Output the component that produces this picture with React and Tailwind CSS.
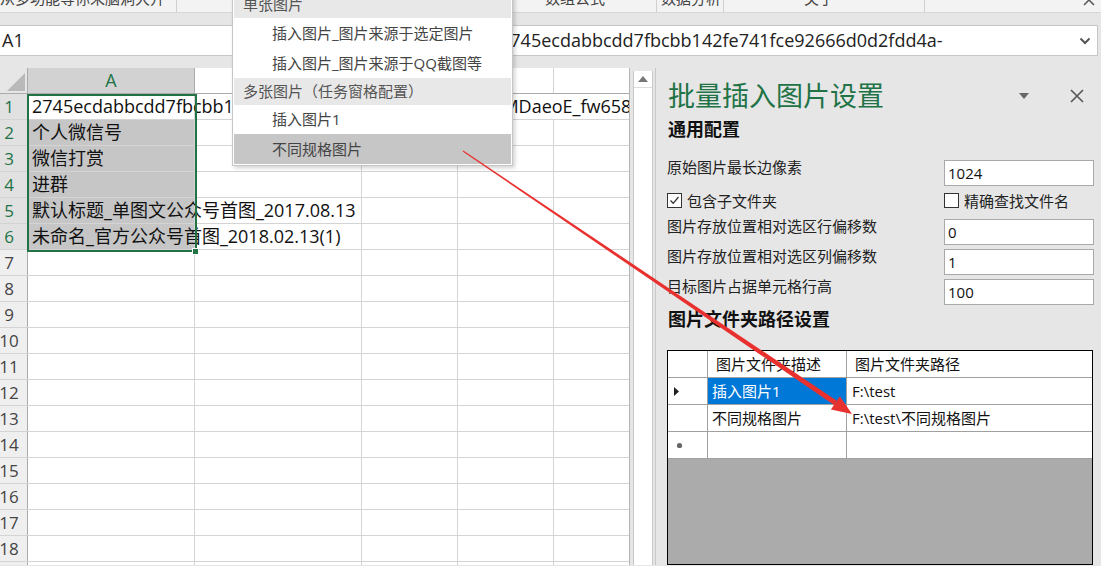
import React from "react";

const F = "font-['Open_Sans','Noto_Sans_CJK_SC',sans-serif]";

const rowsData = [
  { n: 1, a: "2745ecdabbcdd7fbcbb142fe741fce92666d0d2fdd4a-wwMDaeoE_fw658.jpg", merge: true, active: true },
  { n: 2, a: "个人微信号" },
  { n: 3, a: "微信打赏" },
  { n: 4, a: "进群" },
  { n: 5, a: "默认标题_单图文公众号首图_2017.08.13" },
  { n: 6, a: "未命名_官方公众号首图_2018.02.13(1)" },
  { n: 7 }, { n: 8 }, { n: 9 }, { n: 10 }, { n: 11 }, { n: 12 }, { n: 13 },
  { n: 14 }, { n: 15 }, { n: 16 }, { n: 17 }, { n: 18 }, { n: 19 },
];

function GridRow({ r }) {
  const sel = r.n <= 6;
  return (
    <div className="flex h-[26px] shrink-0 border-b border-[#d4d4d4]">
      <div
        className={
          sel
            ? "w-[28px] shrink-0 border-r border-[#ababab] bg-[#e1e1e1] text-[#217346] flex items-center justify-center pr-[9px] text-[17px] leading-[25px]"
            : "w-[28px] shrink-0 border-r border-[#ababab] bg-[#efefef] text-[#444444] flex items-center justify-center pr-[9px] text-[17px] leading-[25px]"
        }
      >
        {r.n}
      </div>
      <div
        className={
          sel && !r.active
            ? "relative z-10 w-[167px] shrink-0 border-r border-[#d4d4d4] bg-[#c6c6c6] pl-[4px] whitespace-nowrap text-[18px] leading-[25px] text-[#111]"
            : "relative z-10 w-[167px] shrink-0 border-r border-[#d4d4d4] bg-white pl-[4px] whitespace-nowrap text-[18px] leading-[25px] text-[#111]"
        }
      >
        {r.a || ""}
      </div>
      {r.merge ? (
        <div className="flex-1 bg-white" />
      ) : (
        <>
          <div className="w-[167px] shrink-0 border-r border-[#d4d4d4] bg-white" />
          <div className="w-[96px] shrink-0 border-r border-[#d4d4d4] bg-white" />
          <div className="w-[96px] shrink-0 border-r border-[#d4d4d4] bg-white" />
          <div className="flex-1 bg-white" />
        </>
      )}
    </div>
  );
}

function Sheet() {
  return (
    <div className="w-[630px] shrink-0 flex flex-col overflow-hidden border-r border-[#b4b4b4] bg-white">
      <div className="flex h-[26px] shrink-0 border-b border-[#ababab] bg-white">
        <div className="w-[28px] shrink-0 border-r border-[#ababab] bg-[#e6e6e6] relative">
          <svg className="absolute left-[6px] top-[4px]" width="20" height="20" viewBox="0 0 20 20">
            <polygon points="1,19 19,1 19,19" fill="#b9b9b9" />
          </svg>
        </div>
        <div className="w-[167px] shrink-0 border-r border-[#ababab] bg-[#d2d2d2] text-[#217346] text-[18px] leading-[25px] flex items-center justify-center">
          A
        </div>
        <div className="w-[167px] shrink-0 border-r border-[#d4d4d4] text-[#444] text-[18px] leading-[25px] flex items-center justify-center">
          B
        </div>
        <div className="w-[96px] shrink-0 border-r border-[#d4d4d4] text-[#444] text-[18px] leading-[25px] flex items-center justify-center">
          C
        </div>
        <div className="w-[96px] shrink-0 border-r border-[#d4d4d4]" />
        <div className="flex-1" />
      </div>
      {rowsData.map((r) => (
        <GridRow key={r.n} r={r} />
      ))}
    </div>
  );
}

function Field({ label, value }) {
  return (
    <div className="flex justify-between items-start">
      <div className="-mt-[3px] text-[15px] leading-[20px] text-[#222]">{label}</div>
      <div className="w-[150px] h-[26px] bg-white border border-[#a9a9a9] pl-[3px] text-[15px] leading-[24px] text-[#111]">
        {value}
      </div>
    </div>
  );
}

function Panel() {
  return (
    <div className="flex-1 flex flex-col pl-[11px] pr-[7px] bg-[#e6e6e6] min-w-0">
      <div className="flex items-center mt-[11px] h-[34px]">
        <div className="text-[27px] leading-[34px] text-[#217346] pl-[1px]">批量插入图片设置</div>
        <div className="flex-1" />
        <svg width="12" height="8" viewBox="0 0 12 8" className="mr-[40px]">
          <polygon points="1,1 11,1 6,7" fill="#666" />
        </svg>
        <svg width="14" height="14" viewBox="0 0 14 14" className="mr-[10px]">
          <path d="M1 1 L13 13 M13 1 L1 13" stroke="#555" strokeWidth="1.6" />
        </svg>
      </div>
      <div className="mt-[4px] text-[18px] leading-[24px] font-bold text-[#111] pl-[1px]">通用配置</div>
      <div className="mt-[19px]">
        <Field label="原始图片最长边像素" value="1024" />
      </div>
      <div className="mt-[7px] flex justify-between items-center h-[15px]">
        <div className="flex items-center gap-[5px]">
          <div className="w-[15px] h-[15px] bg-white border border-[#333] flex items-center justify-center">
            <svg width="11" height="11" viewBox="0 0 11 11">
              <path d="M1.5 5.5 L4.2 8.3 L9.5 2" stroke="#333" strokeWidth="1.3" fill="none" />
            </svg>
          </div>
          <span className="text-[15px] leading-[20px] text-[#222]">包含子文件夹</span>
        </div>
        <div className="w-[150px] flex items-center gap-[5px]">
          <div className="w-[15px] h-[15px] bg-white border border-[#333]" />
          <span className="text-[15px] leading-[20px] text-[#222]">精确查找文件名</span>
        </div>
      </div>
      <div className="mt-[11px]">
        <Field label="图片存放位置相对选区行偏移数" value="0" />
      </div>
      <div className="mt-[4px]">
        <Field label="图片存放位置相对选区列偏移数" value="1" />
      </div>
      <div className="mt-[4px]">
        <Field label="目标图片占据单元格行高" value="100" />
      </div>
      <div className="mt-[2px] text-[18px] leading-[24px] font-bold text-[#111] pl-[1px]">图片文件夹路径设置</div>
      <div className="mt-[19px] flex-1 mr-[1px] border border-black bg-[#ababab] flex flex-col text-[15px] text-[#111]">
        <div className="flex h-[27px] shrink-0 bg-white border-b border-[#a0a0a0]">
          <div className="w-[40px] shrink-0 border-r border-[#a0a0a0]" />
          <div className="w-[139px] shrink-0 border-r border-[#a0a0a0] pl-[8px] leading-[26px]">图片文件夹描述</div>
          <div className="flex-1 pl-[8px] leading-[26px]">图片文件夹路径</div>
        </div>
        <div className="flex h-[27px] shrink-0 bg-white border-b border-[#a0a0a0]">
          <div className="w-[40px] shrink-0 border-r border-[#a0a0a0] flex items-center pl-[6px]">
            <svg width="6" height="9" viewBox="0 0 6 9">
              <polygon points="0,0 5,4.5 0,9" fill="#222" />
            </svg>
          </div>
          <div className="w-[139px] shrink-0 border-r border-[#a0a0a0] bg-[#0078d7] text-white pl-[4px] leading-[26px]">插入图片1</div>
          <div className="flex-1 pl-[5px] leading-[26px]">F:\test</div>
        </div>
        <div className="flex h-[27px] shrink-0 bg-white border-b border-[#a0a0a0]">
          <div className="w-[40px] shrink-0 border-r border-[#a0a0a0]" />
          <div className="w-[139px] shrink-0 border-r border-[#a0a0a0] pl-[4px] leading-[26px]">不同规格图片</div>
          <div className="flex-1 pl-[5px] leading-[26px]">F:\test\不同规格图片</div>
        </div>
        <div className="flex h-[27px] shrink-0 bg-white border-b border-[#a0a0a0]">
          <div className="w-[40px] shrink-0 border-r border-[#a0a0a0] flex items-center pl-[8px]">
            <svg width="7" height="7" viewBox="0 0 7 7">
              <circle cx="3.5" cy="3.5" r="2.6" fill="#666" />
            </svg>
          </div>
          <div className="w-[139px] shrink-0 border-r border-[#a0a0a0]" />
          <div className="flex-1" />
        </div>
      </div>
    </div>
  );
}

function Menu() {
  return (
    <div className="absolute left-[232px] top-[-11px] w-[281px] z-30 bg-white border border-[#c6c6c6] shadow-[2px_2px_4px_rgba(0,0,0,0.18)] p-[1px] text-[15px] text-[#444]">
      <div className="h-[27px] bg-[#e8e8e8] pl-[9px] leading-[27px] text-[#555]">单张图片</div>
      <div className="h-[30px] pl-[38px] leading-[30px]">插入图片_图片来源于选定图片</div>
      <div className="h-[30px] pl-[38px] leading-[30px]">插入图片_图片来源于QQ截图等</div>
      <div className="h-[27px] bg-[#e8e8e8] pl-[9px] leading-[27px] text-[#555]">多张图片（任务窗格配置）</div>
      <div className="h-[29px] pl-[38px] leading-[29px]">插入图片1</div>
      <div className="h-[30px] pl-[38px] leading-[30px] bg-[#c6c6c6]">不同规格图片</div>
    </div>
  );
}

function Arrow() {
  return (
    <svg className="absolute left-0 top-0 z-40 pointer-events-none" width="1101" height="566" viewBox="0 0 1101 566">
      <polygon points="462.66,151.5 834.0,404.9 836.8,400.7 463.34,150.5" fill="#e8312f" />
      <polygon points="830.9,409.4 852,414 839.9,396.2" fill="#e8312f" />
    </svg>
  );
}

export default function App() {
  return (
    <div className={`relative w-[1101px] h-[566px] overflow-hidden bg-[#e6e6e6] ${F}`}>
      {/* ribbon strip */}
      <div className="flex h-[13px] bg-[#f3f3f3] border-b border-[#d6d6d6] overflow-hidden text-[15px] text-[#444]">
        <div className="w-[177px] shrink-0 border-r border-[#d0d0d0] -mt-[12px] leading-[20px] whitespace-nowrap">
          从多功能等你来脑洞大开
        </div>
        <div className="w-[368px] shrink-0" />
        <div className="w-[112px] shrink-0 border-r border-[#d0d0d0] -mt-[12px] leading-[20px] whitespace-nowrap">数组公式</div>
        <div className="w-[67px] shrink-0 border-r border-[#d0d0d0] pl-[4px] -mt-[12px] leading-[20px] whitespace-nowrap">数据分析</div>
        <div className="w-[201px] shrink-0 border-r border-[#d0d0d0] pl-[80px] -mt-[12px] leading-[20px] whitespace-nowrap">关于</div>
        <div className="flex-1 flex justify-end pr-[6px]">
          <svg width="12" height="8" viewBox="0 0 12 8" className="-mt-[2px]">
            <path d="M1 7 L6 2 L11 7" stroke="#555" strokeWidth="1.5" fill="none" />
          </svg>
        </div>
      </div>
      {/* formula bar */}
      <div className="mt-[12px] mr-[3px] h-[31px] bg-white border-y border-r border-[#c6c6c6] flex items-center text-[18px] text-[#222]">
        <div className="w-[500px] shrink-0 pl-[2px] leading-[29px]">A1</div>
        <div className="flex-1 leading-[29px] whitespace-nowrap overflow-hidden">2745ecdabbcdd7fbcbb142fe741fce92666d0d2fdd4a-</div>
        <svg width="12" height="8" viewBox="0 0 12 8" className="mr-[6px]">
          <path d="M1.5 1.5 L6 6 L10.5 1.5" stroke="#555" strokeWidth="2" fill="none" />
        </svg>
      </div>
      {/* main */}
      <div className="mt-[12px] flex h-[497px]">
        <Sheet />
        <div className="w-[3px] shrink-0" />
        <div className="w-[20px] shrink-0 mt-[3px] bg-white border-x border-[#c8c8c8] flex flex-col">
          <div className="h-[17px] border-b border-[#dcdcdc] flex items-center justify-center">
            <svg width="10" height="6" viewBox="0 0 10 6">
              <polygon points="0,6 5,0 10,6" fill="#777" />
            </svg>
          </div>
        </div>
        <div className="w-[3px] shrink-0 border-r border-[#c8c8c8]" />
        <Panel />
      </div>
      {/* selection overlay */}
      <div className="absolute left-[27px] top-[94px] w-[170px] h-[158px] border-2 border-[#217346] z-20 pointer-events-none" />
      <div className="absolute left-[192px] top-[248px] w-[7px] h-[7px] bg-[#217346] border border-white z-20" />
      <Menu />
      <Arrow />
    </div>
  );
}
